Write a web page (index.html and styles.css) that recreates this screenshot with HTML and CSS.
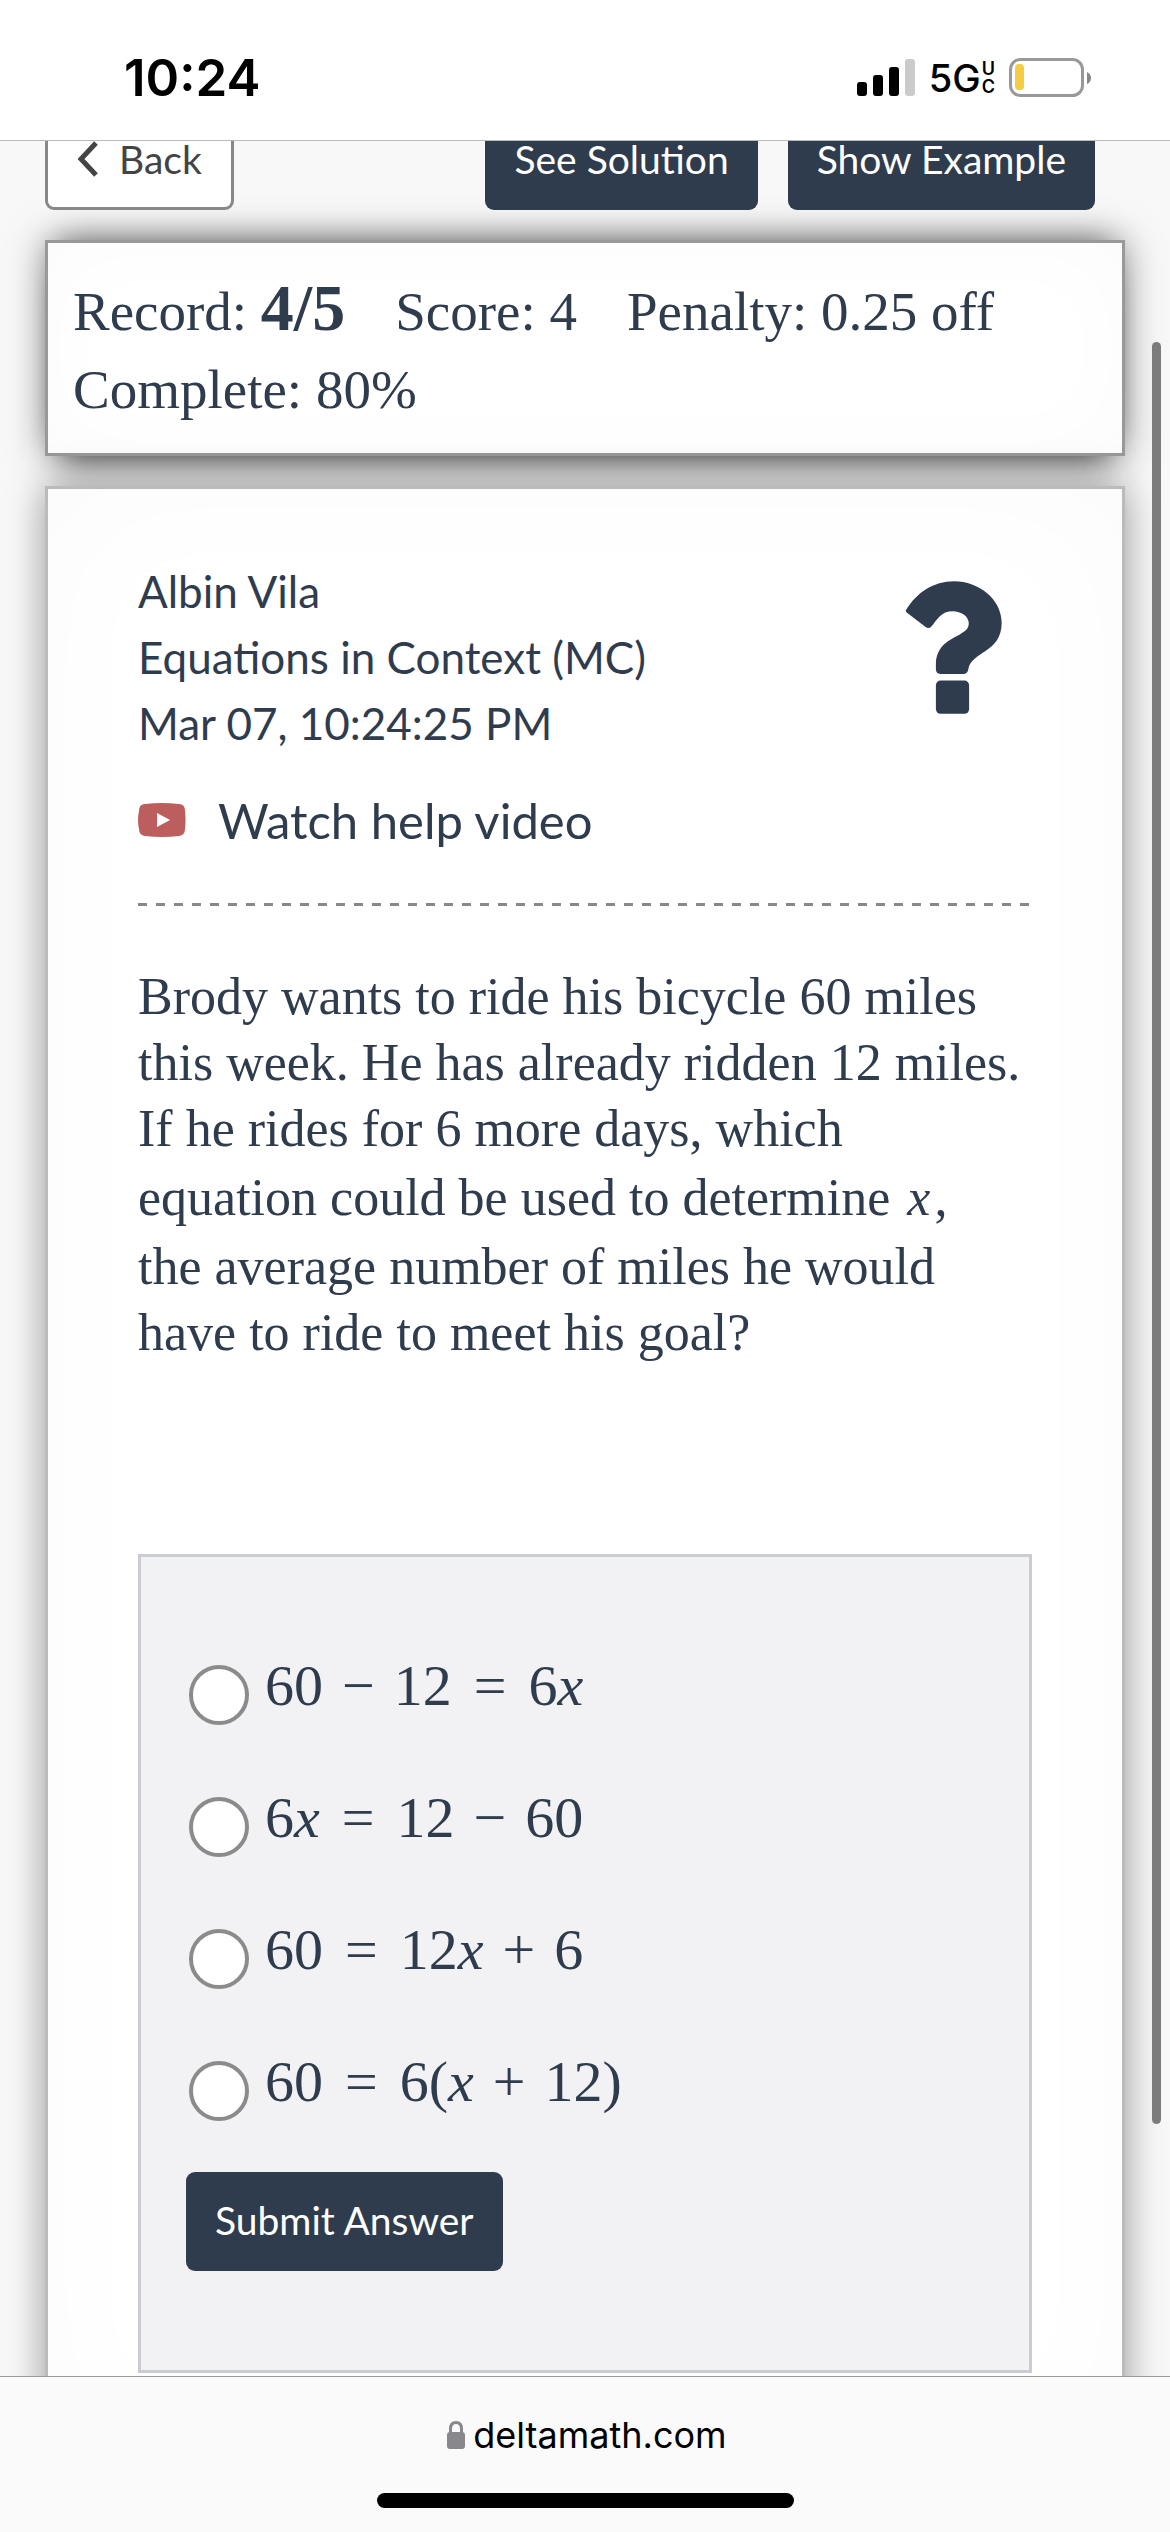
FILE: index.html
```html
<!DOCTYPE html>
<html lang="en">
  <head>
    <meta charset="utf-8">
    <title>DeltaMath</title>
    <link rel="stylesheet" href="styles.css">
  </head>
  <body>
    <header class="status">
      <div class="time">10:24</div>
      <div class="indicators">
        <svg class="signal" viewBox="0 0 58 38">
          <rect x="0" y="23" width="10" height="14" rx="3"/>
          <rect x="16" y="16" width="10" height="21" rx="3"/>
          <rect x="32" y="8" width="10" height="29" rx="3"/>
          <rect x="48" y="0" width="10" height="37" rx="3" fill="#cbcbcb"/>
        </svg>
        <div class="network">5G<span class="uc"><span>U</span><span>C</span></span></div>
        <svg class="battery" viewBox="0 0 83 40">
          <rect x="1.5" y="1.5" width="72" height="36" rx="10" fill="none" stroke="#999" stroke-width="3"/>
          <rect x="6" y="6" width="9" height="26" rx="4" fill="#f5cd45"/>
          <path d="M78 14q4 2 4 6t-4 6z" fill="#888"/>
        </svg>
      </div>
    </header>

    <main>
      <nav class="toolbar">
        <button class="btn btn-back" type="button">
          <svg viewBox="0 0 22 36"><path d="M19 2L4 18l15 16" fill="none" stroke="#444" stroke-width="5"/></svg>
          Back
        </button>
        <button class="btn btn-solution" type="button">See Solution</button>
        <button class="btn" type="button">Show Example</button>
      </nav>

      <section class="paper record">
        <span>Record: <b>4/5</b></span>
        <span>Score: 4</span>
        <span>Penalty: 0.25 off</span>
        <span>Complete: 80%</span>
      </section>

      <section class="paper problem">
        <div class="info">
          <div>
            <div>Albin Vila</div>
            <div>Equations in Context (MC)</div>
            <div>Mar 07, 10:24:25 PM</div>
          </div>
          <svg class="question" viewBox="377 123 289 399">
            <path d="M378 208C410 157 459 123 522 123c74 0 143 54 143 125 0 93-93 84-101 143q-3 11-14 11h-69q-14 0-14-14v-15c0-56 43-75 72-90 17-10 27-16 27-34 0-21-24-36-48-36-36 0-46 24-66 48q-8 6-16 0l-55-42q-7-5-3-11z"/>
            <rect x="467" y="422" width="100" height="100" rx="14"/>
          </svg>
        </div>

        <a class="video" href="#video">
          <svg viewBox="0 0 48 34">
            <path d="M7 1Q24-1 41 1q6 0 6 7 1 9 0 18 0 6-6 7-17 2-34 0-6-1-6-7-2-9 0-18 0-7 6-7z" fill="#bd5e5e"/>
            <path d="M19 10l13 7-13 7z" fill="#fff"/>
          </svg>
          Watch help video
        </a>

        <hr>

        <p class="text">Brody wants to ride his bicycle 60 miles this week. He has already ridden 12 miles. If he rides for 6 more days, which equation could be used to determine <i>x</i>,<br>the average number of miles he would<br>have to ride to meet his goal?</p>

        <form class="answers">
          <div class="option">
            <input type="radio" name="answer" id="a1">
            <label for="a1">60<span class="op">−</span>12<span class="eq">=</span>6<i>x</i></label>
          </div>
          <div class="option">
            <input type="radio" name="answer" id="a2">
            <label for="a2">6<i>x</i><span class="eq">=</span>12<span class="op">−</span>60</label>
          </div>
          <div class="option">
            <input type="radio" name="answer" id="a3">
            <label for="a3">60<span class="eq">=</span>12<i>x</i><span class="op">+</span>6</label>
          </div>
          <div class="option">
            <input type="radio" name="answer" id="a4">
            <label for="a4">60<span class="eq">=</span>6(<i>x</i><span class="op">+</span>12)</label>
          </div>
          <button class="btn submit" type="button">Submit Answer</button>
        </form>
      </section>

      <div class="scrollbar"></div>
    </main>

    <footer class="browser">
      <div class="address">
        <svg viewBox="0 0 18 28">
          <rect x="0" y="11" width="18" height="17" rx="3" fill="#88888c"/>
          <path d="M3.500 12V8Q3.500 1.500 9 1.500T14.500 8v4" fill="none" stroke="#88888c" stroke-width="3"/>
        </svg>
        deltamath.com
      </div>
      <div class="home"></div>
    </footer>
  </body>
</html>
```

FILE: styles.css
```css
* {
  box-sizing: border-box;
}
body {
  margin: 0;
  height: 100vh;
  display: flex;
  flex-direction: column;
  background-color: #f8f8f8;
  color: #2f3c4e;
  font-family: Georgia, "Liberation Serif", serif;
}
svg {
  flex: none;
}

/* phone status bar */
.status {
  flex: none;
  display: flex;
  justify-content: space-between;
  height: 141px;
  padding: 48px 78px 0 124px;
  border-bottom: 1px solid #bbb;
  background-color: #fff;
  color: #000;
  font-family: Inter, sans-serif;
}
.time {
  font-size: 51px;
  font-weight: 600;
  line-height: 60px;
}
.indicators {
  display: flex;
  align-items: center;
  height: 60px;
}
.signal {
  width: 58px;
  height: 38px;
}
.network {
  display: flex;
  align-items: center;
  margin: 0 14px;
  font-size: 38px;
  font-weight: 500;
  line-height: 60px;
}
.uc {
  display: flex;
  flex-direction: column;
  margin-left: 1px;
  font-size: 18px;
  font-weight: 600;
  line-height: 18px;
}
.battery {
  width: 83px;
  height: 40px;
}

main {
  position: relative;
  flex: 1;
  min-height: 0;
  overflow: hidden;
  padding: 0 45px;
}

/* scrolled partly under the status bar */
.toolbar {
  display: flex;
  gap: 30px;
  margin-top: -30px;
  padding-right: 30px;
}
.btn {
  height: 99px;
  padding: 0 29px 4px;
  border: 0;
  border-radius: 9px;
  background-color: #2f3c4e;
  color: #fff;
  font-family: Lato, sans-serif;
  font-size: 39px;
}
.btn-back {
  display: flex;
  align-items: center;
  gap: 20px;
  border: 3px solid #888;
  background-color: #fff;
  color: #444;
}
.btn-back svg {
  width: 22px;
  height: 36px;
}
.btn-solution {
  margin-left: auto;
}

.paper {
  margin-top: 30px;
  border: 3px solid #999;
  background-color: #fff;
}
.record {
  display: flex;
  flex-wrap: wrap;
  column-gap: 50px;
  padding: 30px 25px 24px;
  box-shadow:
    0 0 36px rgba(0, 0, 0, 0.4),
    0 -16px 30px -18px rgba(0, 0, 0, 0.4),
    0 22px 30px -18px rgba(0, 0, 0, 0.6),
    inset 0 0 90px rgba(0, 0, 0, 0.02);
  font-size: 55px;
  line-height: 78px;
}
.record b {
  font-size: 66px;
  line-height: 60px;
}
.problem {
  padding: 69px 90px 90px;
  border-color: #bbb;
  box-shadow: 0 0 36px rgba(0, 0, 0, 0.4), inset 0 0 150px rgba(0, 0, 0, 0.02);
}

.info {
  display: flex;
  justify-content: space-between;
  font-family: Lato, sans-serif;
  font-size: 44px;
  line-height: 66px;
}
.question {
  width: 96px;
  height: 133px;
  margin: 23px 30px 0 0;
  fill: #2f3c4e;
}
.video {
  display: flex;
  align-items: center;
  gap: 32px;
  margin-top: 31px;
  color: #2f3c4e;
  font-family: Lato, sans-serif;
  font-size: 49px;
  line-height: 66px;
  text-decoration: none;
}
.video svg {
  width: 48px;
  height: 34px;
}
hr {
  height: 3px;
  margin: 50px 0 58px;
  border: 0;
  background-image: repeating-linear-gradient(to right, #888 0 9px, transparent 9px 18px);
}
.text {
  margin: 0;
  font-size: 52px;
  line-height: 66px;
}
.text i {
  margin: 0 4px;
  line-height: 72px;
}

.answers {
  margin-top: 188px;
  padding: 108px 45px 99px;
  border: 3px solid #c9cdd1;
  background-color: #f2f2f4;
}
.option {
  display: flex;
  gap: 16px;
  margin-bottom: 72px;
  padding-left: 3px;
}
.option input {
  appearance: none;
  width: 60px;
  height: 60px;
  margin: 0;
  border: 4px solid #8b8b8b;
  border-radius: 50%;
  background-color: #fff;
}
.option label {
  height: 60px;
  font-family: "Liberation Serif", serif;
  font-size: 58px;
  line-height: 42px;
}
.op {
  margin: 0 19px;
}
.eq {
  margin: 0 22px;
}
.submit {
  display: block;
  margin-top: -21px;
}

.scrollbar {
  position: absolute;
  top: 201px;
  right: 9px;
  bottom: 252px;
  width: 9px;
  border-radius: 5px;
  background-color: #7b7b7b;
}

.browser {
  flex: none;
  height: 156px;
  padding-top: 36px;
  border-top: 1px solid #999;
  background-color: #fafafa;
  color: #000;
  font-family: Inter, sans-serif;
}
.address {
  display: flex;
  justify-content: center;
  align-items: center;
  gap: 8px;
  padding-left: 4px;
  font-size: 36px;
  line-height: 44px;
}
.address svg {
  width: 18px;
  height: 28px;
}
.home {
  width: 417px;
  height: 15px;
  margin: 36px auto 0;
  border-radius: 8px;
  background-color: #000;
}
```
